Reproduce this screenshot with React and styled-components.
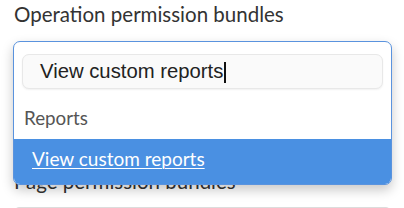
import React from "react";
import styled, { createGlobalStyle } from "styled-components";

const Global = createGlobalStyle`
  html, body { margin: 0; padding: 0; background: #fff; }
  body { font-family: Lato, "Open Sans", sans-serif; color: #333; }
`;

const Page = styled.div`
  padding: 2px 12px 0 13px;
  width: 404px;
  box-sizing: border-box;
  overflow: hidden;
  height: 208px;
`;

const Field = styled.div`
  display: flex;
  flex-direction: column;
`;

const Label = styled.div`
  font-size: 20.5px;
  line-height: 24px;
  color: #333;
  padding-left: 1px;
  margin-bottom: 15px;
`;

const ControlArea = styled.div`
  position: relative;
  height: 128px;
`;

const Menu = styled.div`
  position: absolute;
  top: 0;
  left: 0;
  right: 0;
  z-index: 2;
  background: #fff;
  border: 1px solid #5a93de;
  border-radius: 7px;
  overflow: hidden;
  box-shadow: 0 5px 12px rgba(0, 0, 0, 0.22);
  display: flex;
  flex-direction: column;
`;

const SearchWrap = styled.div`
  padding: 12px 8px 17px 8px;
`;

const Search = styled.div`
  height: 33px;
  border: 1px solid #e8e8e8;
  border-radius: 7px;
  background: #fafafa;
  box-shadow: 0 1px 2px rgba(0, 0, 0, 0.06);
  display: flex;
  align-items: center;
  padding-left: 17px;
  font-family: "Liberation Sans", Arial, sans-serif;
  font-size: 20.3px;
  color: #222;
`;

const Caret = styled.span`
  display: inline-block;
  width: 2px;
  height: 21px;
  background: #111;
  margin-left: 1px;
  margin-top: 1px;
`;

const GroupHeader = styled.div`
  font-size: 18.8px;
  line-height: 23px;
  color: #555;
  padding: 0 10px 10px 10px;
`;

const Option = styled.div`
  background: ${(p) => (p.$active ? "#4a90e2" : "#fff")};
  color: ${(p) => (p.$active ? "#fff" : "#333")};
  font-size: 19px;
  line-height: 23px;
  padding: 8px 18px 14px 18px;
  text-decoration: ${(p) => (p.$active ? "underline" : "none")};
  text-underline-offset: 2px;
  text-decoration-thickness: 1px;
`;

const NextLabel = styled(Label)`
  margin-bottom: 14px;
`;

const Input = styled.div`
  height: 36px;
  border: 1px solid #dcdcdc;
  border-radius: 5px;
  margin: 0 1px;
`;

export default function App() {
  return (
    <>
      <Global />
      <Page>
        <Field>
          <Label>Operation permission bundles</Label>
          <ControlArea>
            <Menu>
              <SearchWrap>
                <Search>
                  View custom reports
                  <Caret />
                </Search>
              </SearchWrap>
              <GroupHeader>Reports</GroupHeader>
              <Option $active>View custom reports</Option>
            </Menu>
          </ControlArea>
        </Field>
        <Field>
          <NextLabel>Page permission bundles</NextLabel>
          <Input />
        </Field>
      </Page>
    </>
  );
}
